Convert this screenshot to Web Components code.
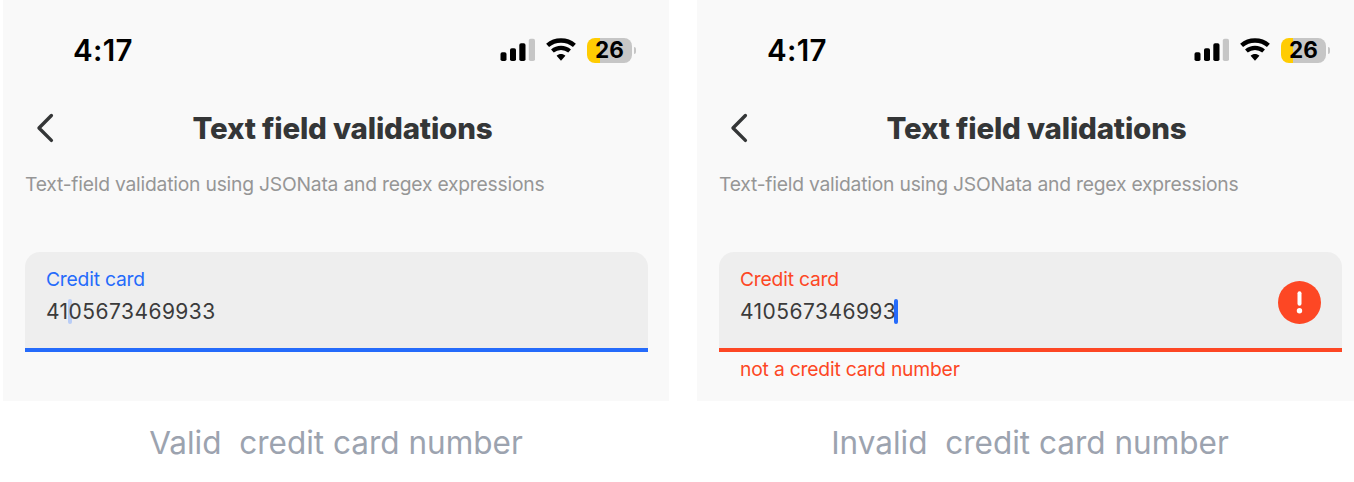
<!DOCTYPE html>
<html lang="en">
<head>
<meta charset="utf-8">
<title>Text field validations</title>
<style>
  body { margin: 0; background: #fff; font-family: Inter, "Liberation Sans", sans-serif; overflow: hidden; }
</style>
</head>
<body>
<validation-gallery>
  <phone-example caption="Valid  credit card number">
    <card-field label="Credit card" before="41" after="05673469933" caret="faded"></card-field>
  </phone-example>
  <phone-example caption="Invalid  credit card number">
    <card-field label="Credit card" before="410567346993" after="" error="not a credit card number"></card-field>
  </phone-example>
</validation-gallery>
<script>
class ValidationGallery extends HTMLElement {
  constructor() {
    super();
    this.attachShadow({ mode: 'open' }).innerHTML = `
      <style>
        :host { display: flex; gap: 28px; padding-left: 3px; height: 482px; overflow: hidden; box-sizing: border-box; }
      </style>
      <slot></slot>`;
  }
}

class StatusBar extends HTMLElement {
  constructor() {
    super();
    this.attachShadow({ mode: 'open' }).innerHTML = `
      <style>
        :host { display: flex; align-items: center; height: 40px; padding: 30px 33px 0 70px; color: #000; }
        time { font-size: 29.5px; line-height: 40px; font-weight: 600; letter-spacing: 0.3px; flex: 1; }
        svg { display: block; flex: none; }
        .signal { margin-right: 10px; }
        .wifi { margin-right: 11px; }
        .battery { width: 45px; height: 25px; border-radius: 8px; flex: none; text-align: center;
          background: linear-gradient(90deg, #ffcc02 12.5px, #c6c6c6 12.5px);
          font-size: 22.5px; line-height: 24px; font-weight: 700; }
        .cap { width: 2.5px; height: 7px; margin-left: 1.5px; border-radius: 0 3px 3px 0; background: #c6c6c6; }
      </style>
      <time>4:17</time>
      <svg class="signal" width="36" height="24" viewBox="0 0 36 24">
        <rect x="0.5" y="14.2" width="6" height="8.8" rx="1.8"/>
        <rect x="10" y="10.2" width="6" height="12.8" rx="1.8"/>
        <rect x="19.3" y="5.2" width="6.2" height="17.8" rx="1.8"/>
        <rect x="28.8" y="0.8" width="6.2" height="22.2" rx="1.8" fill="#c6c6c6"/>
      </svg>
      <svg class="wifi" width="30" height="24" viewBox="0 0 30 24">
        <path d="M1.6 7.4C9.2.9 20.8.9 28.4 7.4" fill="none" stroke="#000" stroke-width="4.5"/>
        <path d="M6.4 13C11.4 8.8 18.6 8.8 23.6 13" fill="none" stroke="#000" stroke-width="4.2"/>
        <path d="M10.6 17.8C13 15.4 17 15.4 19.4 17.8L15 22.7Z"/>
      </svg>
      <div class="battery">26</div><div class="cap"></div>`;
  }
}

class NavHeader extends HTMLElement {
  constructor() {
    super();
    this.attachShadow({ mode: 'open' }).innerHTML = `
      <style>
        :host { display: flex; align-items: center; height: 40px; margin-top: 38px; padding-left: 33px; color: #343637; }
        svg { display: block; flex: none; }
        h1 { margin: 0 0 0 136.5px; font-size: 29.5px; line-height: 40px; font-weight: 800; letter-spacing: -0.19px; white-space: nowrap; }
      </style>
      <svg width="20" height="30" viewBox="0 0 20 30">
        <path d="M15.4 2.5L3 15L15.4 27.4" fill="none" stroke="#343637" stroke-width="3.4" stroke-linecap="round" stroke-linejoin="round"/>
      </svg>
      <h1><slot></slot></h1>`;
  }
}

class CardField extends HTMLElement {
  connectedCallback() {
    const error = this.getAttribute('error');
    this.attachShadow({ mode: 'open' }).innerHTML = `
      <style>
        :host { display: block; margin: 52.4px 21px 0 22px; --accent: ${error ? '#fd4724' : '#256bfb'}; }
        .box { display: flex; align-items: center; justify-content: space-between; height: 96px; box-sizing: border-box;
          padding: 0 21px; background: #eee; border-radius: 15px 15px 0 0; }
        .line { height: 4px; background: var(--accent); }
        .label { margin-top: -10px; font-size: 19.3px; line-height: 32px; color: var(--accent); letter-spacing: -0.22px; }
        .value { display: flex; align-items: center; margin-top: 1px; font-size: 21px; line-height: 32px; letter-spacing: 0.45px; color: #3b3b3b; white-space: nowrap; }
        .caret { width: 4px; height: 25px; margin: 0 -2px; border-radius: 2px; background: #256bfb; }
        .caret.faded { background: #b9cdf6; margin: 0 -3px 0 -1px; }
        .value span { position: relative; }
        .error { margin: 1px 0 0 21px; font-size: 19.3px; line-height: 32px; color: var(--accent); letter-spacing: -0.2px; }
        svg { display: block; margin-top: 4px; }
      </style>
      <div class="box">
        <div>
          <div class="label">${this.getAttribute('label')}</div>
          <div class="value"><span>${this.getAttribute('before')}</span><i class="caret ${this.getAttribute('caret') || ''}"></i><span>${this.getAttribute('after')}</span></div>
        </div>
        ${error ? `<svg width="43" height="43" viewBox="0 0 43 43">
          <circle cx="21.5" cy="21.5" r="21.5" fill="#fd4724"/>
          <path d="M21.5 12.3V22.7" stroke="#fff" stroke-width="4" stroke-linecap="round"/>
          <circle cx="21.5" cy="29.8" r="2.7" fill="#fff"/>
        </svg>` : ''}
      </div>
      <div class="line"></div>
      ${error ? `<div class="error">${error}</div>` : ''}`;
  }
}

class PhoneExample extends HTMLElement {
  connectedCallback() {
    this.attachShadow({ mode: 'open' }).innerHTML = `
      <style>
        :host { display: block; flex: none; width: 666px; }
        .screen { height: 401px; background: #f9f9f9; overflow: hidden; }
        p { margin: 20px 0 0 22px; font-size: 19.3px; line-height: 32px; color: #969696; letter-spacing: -0.22px; white-space: nowrap; }
        .caption { height: 81px; font-size: 31.5px; line-height: 84px; text-align: center; color: #9ca3af; white-space: pre; }
      </style>
      <div class="screen">
        <status-bar></status-bar>
        <nav-header>Text field validations</nav-header>
        <p>Text-field validation using JSONata and regex expressions</p>
        <slot></slot>
      </div>
      <div class="caption">${this.getAttribute('caption')}</div>`;
  }
}

customElements.define('status-bar', StatusBar);
customElements.define('nav-header', NavHeader);
customElements.define('card-field', CardField);
customElements.define('phone-example', PhoneExample);
customElements.define('validation-gallery', ValidationGallery);
</script>
</body>
</html>
